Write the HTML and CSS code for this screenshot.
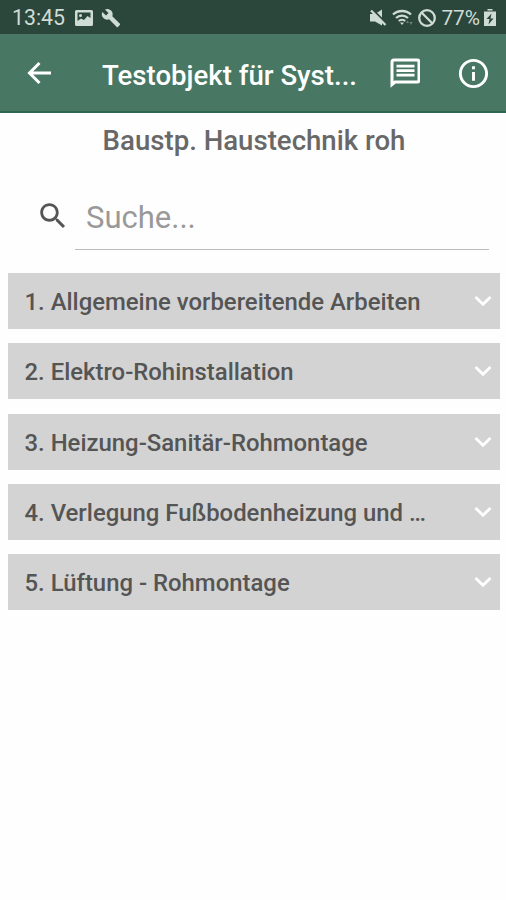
FILE: index.html
```html
<!DOCTYPE html>
<html lang="de">

<head>
    <meta charset="UTF-8">
    <meta name="viewport" content="width=device-width, initial-scale=1">
    <title>Baustp. Haustechnik roh</title>
    <link rel="stylesheet" href="styles.css">
</head>

<body>
    <div class="status-bar">
        <span class="clock">13:45</span>
        <svg class="picture" width="18" height="16" viewBox="0 0 18 16">
            <path fill-rule="evenodd" d="M1.500 0h15A1.500 1.500 0 0 1 18 1.500v13a1.500 1.500 0 0 1-1.500 1.500h-15A1.500 1.500 0 0 1 0 14.500v-13A1.500 1.500 0 0 1 1.500 0zM2.500 2.500v8.500l3.500-2.500 3 1.500 3.500-4 3 2V2.500z"/>
            <circle cx="5.500" cy="5.500" r="1.500"/>
        </svg>
        <svg class="wrench" width="20" height="20" viewBox="0 0 24 24">
            <path d="M22.700 19l-9.100-9.100c.9-2.300.4-5-1.500-6.900-2-2-5-2.400-7.400-1.300L9 6 6 9 1.600 4.700C.4 7.100.9 10.100 2.900 12.100c1.900 1.900 4.600 2.400 6.900 1.500l9.100 9.100c.4.4 1 .4 1.400 0l2.300-2.300c.5-.4.5-1.100.1-1.400z"/>
        </svg>
        <div class="status-right">
            <svg width="17" height="18" viewBox="0 0 17 18">
                <path d="M0 5h5L12 0.500v16L5 12.500H0z"/>
                <path class="slash" d="M2 0L17 15"/>
                <path class="stroke" d="M1 1.500L15.500 16"/>
            </svg>
            <svg width="21" height="18" viewBox="0 0 21 18">
                <path class="stroke" d="M1 5.500C6 .8 14 .8 19 5.500M4 9C7.500 5.800 12.500 5.800 16 9M6.800 12C8.500 10.400 11.500 10.400 13.200 12"/>
                <path d="M8 13.500h4L10 16z"/>
                <path class="dim" d="M14 14l1.500-2.500L17 14zM17.500 13h3L19 16z"/>
            </svg>
            <svg width="18" height="18" viewBox="0 0 18 18">
                <circle class="stroke" cx="9" cy="9" r="7.800"/>
                <path class="stroke" d="M3.500 3.500l11 11"/>
            </svg>
            <span class="percent">77%</span>
            <svg class="battery" width="12" height="18" viewBox="0 0 12 18">
                <path d="M3.500 0h5v1.500h-5zM0 2.500h12V17H0z"/>
                <path class="bolt" d="M7.500 4.500L2.500 10h3L4.500 15.500l5-6h-3z"/>
            </svg>
        </div>
    </div>

    <header class="toolbar">
        <svg class="back" width="24" height="24" viewBox="0 0 24 24">
            <path d="M24 12H2.500M12.500 2L2.500 12l10 10"/>
        </svg>
        <h1>Testobjekt für Syst...</h1>
        <svg class="message" width="30" height="30" viewBox="0 0 30 30">
            <path class="outline" d="M2 26.500V4a2 2 0 0 1 2-2h23a2 2 0 0 1 2 2v18a2 2 0 0 1-2 2H5z"/>
            <path class="lines" d="M6.500 8.200h18M6.500 12.700h18M6.500 17.200h18"/>
        </svg>
        <svg class="info" width="35" height="35" viewBox="0 0 24 24">
            <path d="M11 7h2v2h-2zm0 4h2v6h-2zm1-9C6.480 2 2 6.480 2 12s4.480 10 10 10 10-4.480 10-10S17.520 2 12 2zm0 18c-4.410 0-8-3.590-8-8s3.590-8 8-8 8 3.590 8 8-3.590 8-8 8z"/>
        </svg>
    </header>

    <main>
        <h2>Baustp. Haustechnik roh</h2>

        <div class="search">
            <svg width="34" height="34" viewBox="0 0 24 24">
                <path d="M15.500 14h-.79l-.28-.27C15.410 12.590 16 11.110 16 9.500 16 5.910 13.090 3 9.500 3S3 5.910 3 9.500 5.910 16 9.500 16c1.610 0 3.090-.59 4.230-1.570l.27.28v.79l5 4.990L20.490 19l-4.990-5zm-6 0C7.010 14 5 11.990 5 9.500S7.010 5 9.500 5 14 7.010 14 9.500 11.990 14 9.500 14z"/>
            </svg>
            <input type="text" placeholder="Suche...">
        </div>

        <div class="list">
            <div class="row">
                <span>1. Allgemeine vorbereitende Arbeiten</span>
                <svg class="chevron" viewBox="0 0 18 12"><path d="M1.500 2L9 9.200 16.500 2"/></svg>
            </div>
            <div class="row">
                <span>2. Elektro-Rohinstallation</span>
                <svg class="chevron" viewBox="0 0 18 12"><path d="M1.500 2L9 9.200 16.500 2"/></svg>
            </div>
            <div class="row">
                <span>3. Heizung-Sanitär-Rohmontage</span>
                <svg class="chevron" viewBox="0 0 18 12"><path d="M1.500 2L9 9.200 16.500 2"/></svg>
            </div>
            <div class="row">
                <span>4. Verlegung Fußbodenheizung und …</span>
                <svg class="chevron" viewBox="0 0 18 12"><path d="M1.500 2L9 9.200 16.500 2"/></svg>
            </div>
            <div class="row">
                <span>5. Lüftung - Rohmontage</span>
                <svg class="chevron" viewBox="0 0 18 12"><path d="M1.500 2L9 9.200 16.500 2"/></svg>
            </div>
        </div>
    </main>
</body>

</html>
```
FILE: styles.css
```css
* {
    box-sizing: border-box;
}

body {
    margin: 0;
    min-height: 100vh;
    background-color: #fefefe;
    font-family: Roboto, 'Liberation Sans', sans-serif;
}

svg {
    display: block;
    flex: none;
}

.status-bar {
    display: flex;
    align-items: center;
    height: 34px;
    padding: 2px 10px 0 12px;
    background-color: #2b473c;
    color: #cfdbd5;
    fill: #cfdbd5;
    font-size: 21.300px;
    line-height: 32px;
}

.clock {
    width: 63px;
    white-space: nowrap;
}

.wrench {
    margin-left: 8px;
}

.status-right {
    display: flex;
    align-items: center;
    gap: 5px;
    margin-left: auto;
}

.percent {
    margin-right: -1px;
    font-size: 20.800px;
}

.stroke {
    fill: none;
    stroke: #cfdbd5;
    stroke-width: 2.300;
}

.slash {
    stroke: #2b473c;
    stroke-width: 2;
}

.dim {
    opacity: 0.4;
}

.bolt {
    fill: #2b473c;
}

.toolbar {
    display: flex;
    align-items: center;
    height: 79px;
    padding: 1px 15px 0 27px;
    background-color: #487864;
    border-bottom: 2px solid #2f6650;
    color: #fff;
    fill: #fff;
}

.back {
    fill: none;
    stroke: #fff;
    stroke-width: 3;
}

.toolbar h1 {
    flex: 1;
    margin: 6px 0 0 51px;
    font-size: 27.600px;
    font-weight: 500;
    line-height: 32px;
    white-space: nowrap;
}

.outline {
    fill: none;
    stroke: #fff;
    stroke-width: 3;
}

.lines {
    stroke: #fff;
    stroke-width: 2.8;
}

.info {
    margin-left: 36px;
}

h2 {
    margin: 0;
    padding: 12px 0 0 2px;
    color: #686868;
    font-size: 27.600px;
    font-weight: 500;
    line-height: 32px;
    text-align: center;
}

.search {
    display: flex;
    align-items: center;
    height: 64px;
    margin: 29px 17px 23px 36px;
    fill: #555;
}

.search svg {
    margin-bottom: 4px;
}

.search input {
    flex: 1;
    min-width: 0;
    height: 64px;
    margin-left: 5px;
    padding: 0 11px 1px;
    border: none;
    border-bottom: 1px solid #bbb;
    background: none;
    font-family: inherit;
    font-size: 31px;
    outline: none;
}

.search input::placeholder {
    color: #999;
    opacity: 1;
}

.list {
    display: grid;
    gap: 14.300px;
    padding: 0 6px 0 7.500px;
}

.row {
    display: flex;
    align-items: center;
    justify-content: space-between;
    height: 56px;
    padding: 0 8px 0 17px;
    background-color: #d3d3d3;
    color: #555;
    font-size: 23.900px;
    font-weight: 500;
    line-height: 32px;
    white-space: nowrap;
}

.row span {
    padding-top: 2px;
}

.chevron {
    width: 18px;
    height: 12px;
    fill: none;
    stroke: #fff;
    stroke-width: 2.800;
}
```
